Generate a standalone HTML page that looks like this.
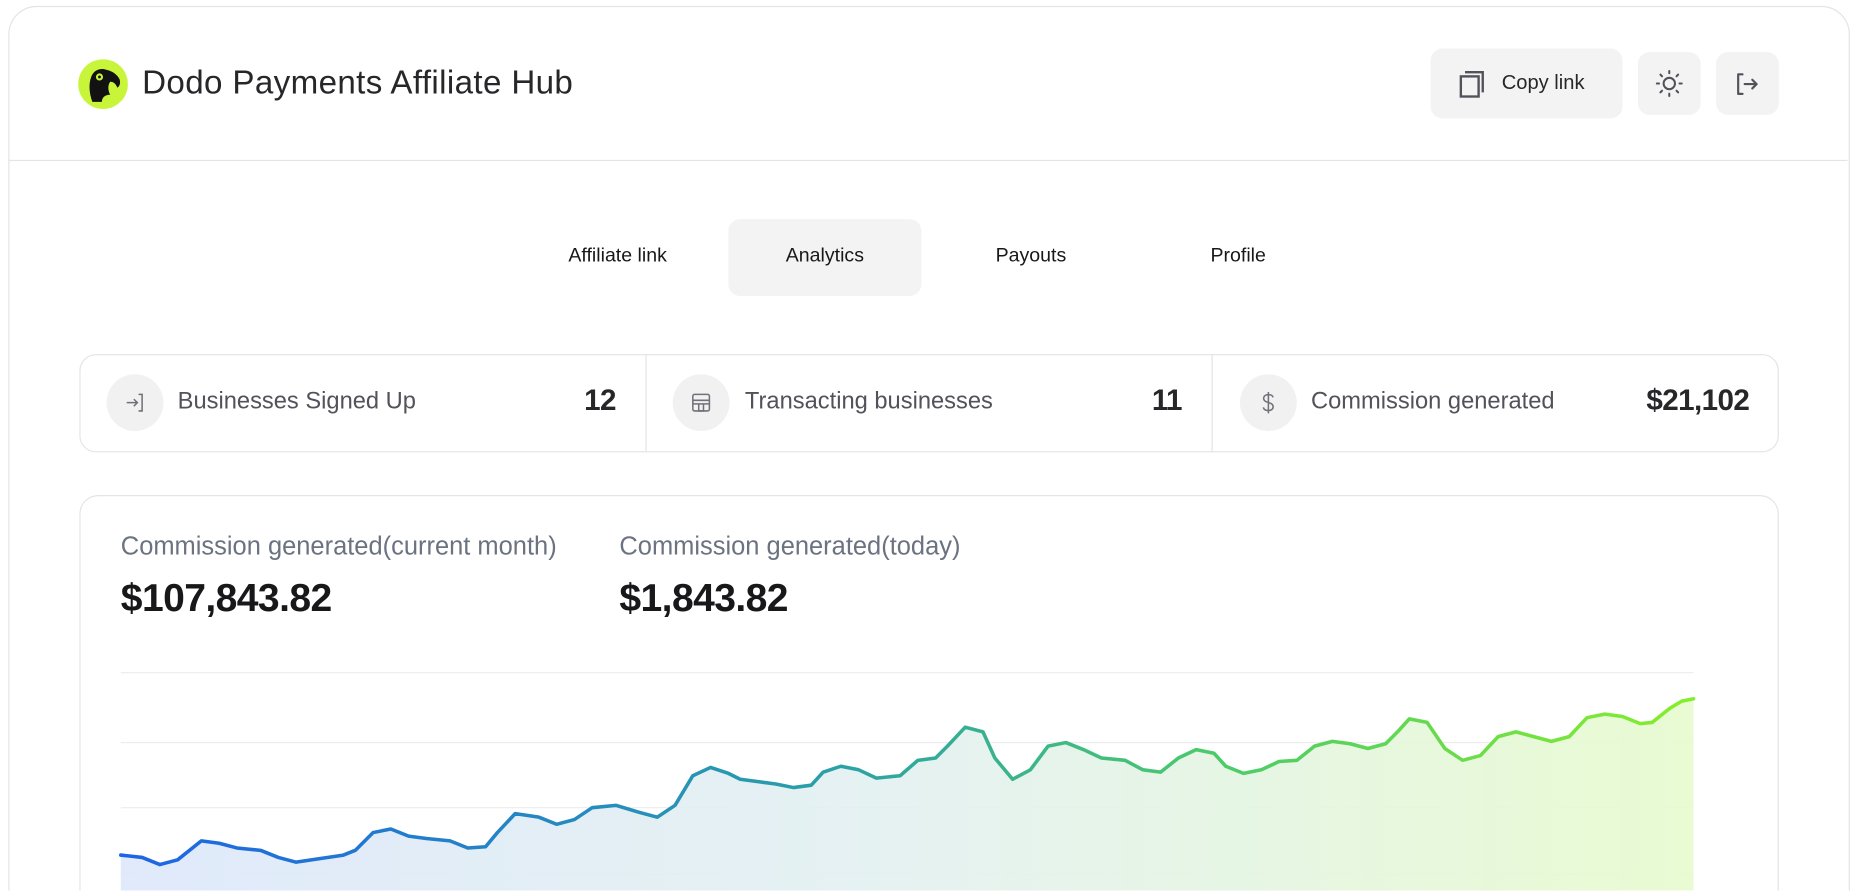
<!DOCTYPE html>
<html><head><meta charset="utf-8"><style>
html,body{margin:0;padding:0;width:1857px;height:891px;overflow:hidden;background:#fff;font-family:"Liberation Sans",sans-serif;}
#clip{position:absolute;left:0;top:0;width:1857px;height:891px;overflow:hidden;}
#w{position:absolute;left:0;top:0;width:1568px;height:752.4px;overflow:hidden;transform:scale(1.18431);transform-origin:0 0;}
.a{position:absolute;}
.card{border:1.3px solid #e4e4e7;}
.btn{background:#f3f3f4;border-radius:10px;}
.tab{font-size:16.5px;color:#18181b;text-align:center;width:163px;top:207px;font-weight:500;}
.lab{font-size:20px;color:#52525b;top:328px;}
.num{font-size:25px;font-weight:bold;color:#27272a;top:324px;letter-spacing:-0.5px;}
.ic{width:48px;height:48px;border-radius:50%;background:#f1f1f2;top:316px;}
.ic svg{position:absolute;left:14px;top:14px;}
</style></head><body><div id="clip"><div id="w">
<div class="a card" style="left:7px;top:5px;width:1553px;height:900px;border-radius:24px;"></div>
<div class="a" style="left:8px;top:135px;width:1552px;height:1.3px;background:#e4e4e7;"></div>
<svg class="a" style="left:66px;top:50px" width="42" height="42" viewBox="0 0 42 42"><circle cx="21" cy="21" r="21" fill="#c8f53a"/><path d="M12 36 C9 28 9 20 11 15 C13 9 19 7 24 9 C29 10 33 13 35 17 C36 20 35 23 33 24 C32 21 30 19 27 19 C25 22 25 26 27 30 C22 30 20 33 20 36 Z" fill="#121212"/><circle cx="18" cy="15" r="3" fill="#c8f53a"/><circle cx="18" cy="15" r="1.2" fill="#121212"/></svg>
<div class="a" style="left:120px;top:54px;font-size:28px;color:#27272a;font-weight:500;letter-spacing:0.3px;">Dodo Payments Affiliate Hub</div>
<div class="a btn" style="left:1208px;top:41px;width:162px;height:59px;"></div>
<svg class="a" style="left:1232px;top:59px" width="24" height="24" viewBox="0 0 24 24" fill="none" stroke="#52525b" stroke-width="2"><rect x="1.5" y="5.5" width="15" height="17"/><path d="M5 2h15v17"/></svg>
<div class="a" style="left:1268px;top:60px;font-size:17px;color:#27272a;font-weight:500;">Copy link</div>
<div class="a btn" style="left:1383px;top:44px;width:53px;height:53px;"></div>
<svg class="a" style="left:1398px;top:59px" width="23" height="23" viewBox="0 0 24 24" fill="none" stroke="#52525b" stroke-width="1.8" stroke-linecap="round"><circle cx="12" cy="12" r="5"/><path d="M12 1v2M12 21v2M1 12h2M21 12h2M4.2 4.2l1.4 1.4M18.4 18.4l1.4 1.4M4.2 19.8l1.4-1.4M18.4 5.6l1.4-1.4"/></svg>
<div class="a btn" style="left:1449px;top:44px;width:53px;height:53px;"></div>
<svg class="a" style="left:1464px;top:60px" width="22" height="22" viewBox="0 0 24 24" fill="none" stroke="#52525b" stroke-width="2" stroke-linecap="round" stroke-linejoin="round"><path d="M8 3H4v18h4M10 12h11M17 8l4 4-4 4"/></svg>
<div class="a" style="left:615px;top:185px;width:163px;height:65px;background:#f3f3f4;border-radius:10px;"></div>
<div class="a tab" style="left:440px;">Affiliate link</div>
<div class="a tab" style="left:615px;">Analytics</div>
<div class="a tab" style="left:789px;">Payouts</div>
<div class="a tab" style="left:964px;">Profile</div>
<div class="a card" style="left:67px;top:299px;width:1433px;height:81px;border-radius:14px;"></div>
<div class="a" style="left:545px;top:299px;width:1.3px;height:82px;background:#e4e4e7;"></div>
<div class="a" style="left:1023px;top:299px;width:1.3px;height:82px;background:#e4e4e7;"></div>
<div class="a ic" style="left:90px;"><svg width="20" height="20" viewBox="0 0 20 20" fill="none" stroke="#71717a" stroke-width="1.3"><path d="M3 10h9M9 7l3 3-3 3M13 3h3v14h-3"/></svg></div>
<div class="a lab" style="left:150px;">Businesses Signed Up</div>
<div class="a num" style="left:440px;width:80px;text-align:right;">12</div>
<div class="a ic" style="left:568px;"><svg width="20" height="20" viewBox="0 0 20 20" fill="none" stroke="#71717a" stroke-width="1.3"><rect x="3" y="3" width="14" height="14" rx="1.5"/><path d="M3 8h14M3 11h14M8 11v6h4v-6"/></svg></div>
<div class="a lab" style="left:629px;">Transacting businesses</div>
<div class="a num" style="left:918px;width:80px;text-align:right;">11</div>
<div class="a ic" style="left:1047px;"><svg width="20" height="20" viewBox="0 0 20 20" fill="none" stroke="#71717a" stroke-width="1.3"><path d="M10 1v18M14 5.5c-.5-1.5-2-2.3-4-2.3-2.5 0-4 1.3-4 3.2 0 4.3 8 2.5 8 7 0 2-1.7 3.3-4 3.3-2.2 0-3.8-1-4.3-2.7"/></svg></div>
<div class="a lab" style="left:1107px;">Commission generated</div>
<div class="a num" style="left:1330px;width:147px;text-align:right;">$21,102</div>
<div class="a card" style="left:67px;top:418px;width:1433px;height:500px;border-radius:16px;"></div>
<div class="a" style="left:102px;top:449px;font-size:21.5px;color:#6b7280;">Commission generated(current month)</div>
<div class="a" style="left:523px;top:449px;font-size:21.5px;color:#6b7280;">Commission generated(today)</div>
<div class="a" style="left:102px;top:486px;font-size:33px;font-weight:bold;color:#18181b;letter-spacing:-0.5px;">$107,843.82</div>
<div class="a" style="left:523px;top:486px;font-size:33px;font-weight:bold;color:#18181b;letter-spacing:-0.5px;">$1,843.82</div>
<svg class="a" style="left:0;top:0" width="1568" height="752" viewBox="0 0 1568 752">
<defs>
<linearGradient id="g" x1="102" y1="0" x2="1430" y2="0" gradientUnits="userSpaceOnUse"><stop offset="0" stop-color="#1d64e6"/><stop offset="0.45" stop-color="#2aa0a8"/><stop offset="0.7" stop-color="#4ccb6a"/><stop offset="1" stop-color="#86ee2c"/></linearGradient>
<linearGradient id="f" x1="102" y1="0" x2="1430" y2="0" gradientUnits="userSpaceOnUse"><stop offset="0" stop-color="#dde8fb"/><stop offset="0.5" stop-color="#e3f1f0"/><stop offset="1" stop-color="#e6fbce"/></linearGradient>
</defs>
<g stroke="#ececee" stroke-width="1"><path d="M102 568H1430M102 627H1430M102 682H1430M102 738H1430"/></g>
<path id="c" d="M102 722 L120 724 L135 730 L150 726 L170 710 L185 712 L200 716 L220 718 L235 724 L250 728 L270 725 L290 722 L300 718 L315 703 L330 700 L345 706 L360 708 L380 710 L395 716 L410 715 L420 703 L435 687 L455 690 L470 696 L485 692 L500 682 L520 680 L540 686 L555 690 L570 680 L585 655 L600 648 L615 653 L625 658 L640 660 L655 662 L670 665 L685 663 L695 652 L710 647 L725 650 L740 657 L760 655 L775 642 L790 640 L800 630 L815 614 L830 618 L840 640 L855 658 L870 650 L885 630 L900 627 L915 633 L930 640 L950 642 L965 650 L980 652 L995 640 L1010 633 L1025 636 L1035 647 L1050 653 L1065 650 L1080 643 L1095 642 L1110 630 L1125 626 L1140 628 L1155 632 L1170 628 L1180 618 L1190 607 L1205 610 L1220 632 L1235 642 L1250 638 L1265 622 L1280 618 L1295 622 L1310 626 L1325 622 L1340 606 L1355 603 L1370 605 L1385 611 L1395 610 L1410 598 L1420 592 L1430 590" fill="none"/>
<path d="M102 722 L120 724 L135 730 L150 726 L170 710 L185 712 L200 716 L220 718 L235 724 L250 728 L270 725 L290 722 L300 718 L315 703 L330 700 L345 706 L360 708 L380 710 L395 716 L410 715 L420 703 L435 687 L455 690 L470 696 L485 692 L500 682 L520 680 L540 686 L555 690 L570 680 L585 655 L600 648 L615 653 L625 658 L640 660 L655 662 L670 665 L685 663 L695 652 L710 647 L725 650 L740 657 L760 655 L775 642 L790 640 L800 630 L815 614 L830 618 L840 640 L855 658 L870 650 L885 630 L900 627 L915 633 L930 640 L950 642 L965 650 L980 652 L995 640 L1010 633 L1025 636 L1035 647 L1050 653 L1065 650 L1080 643 L1095 642 L1110 630 L1125 626 L1140 628 L1155 632 L1170 628 L1180 618 L1190 607 L1205 610 L1220 632 L1235 642 L1250 638 L1265 622 L1280 618 L1295 622 L1310 626 L1325 622 L1340 606 L1355 603 L1370 605 L1385 611 L1395 610 L1410 598 L1420 592 L1430 590 L1430 760 L102 760 Z" fill="url(#f)" opacity="0.9"/>
<use href="#c" stroke="url(#g)" stroke-width="3" stroke-linejoin="round" stroke-linecap="round"/>
</svg>
</div></div></body></html>
